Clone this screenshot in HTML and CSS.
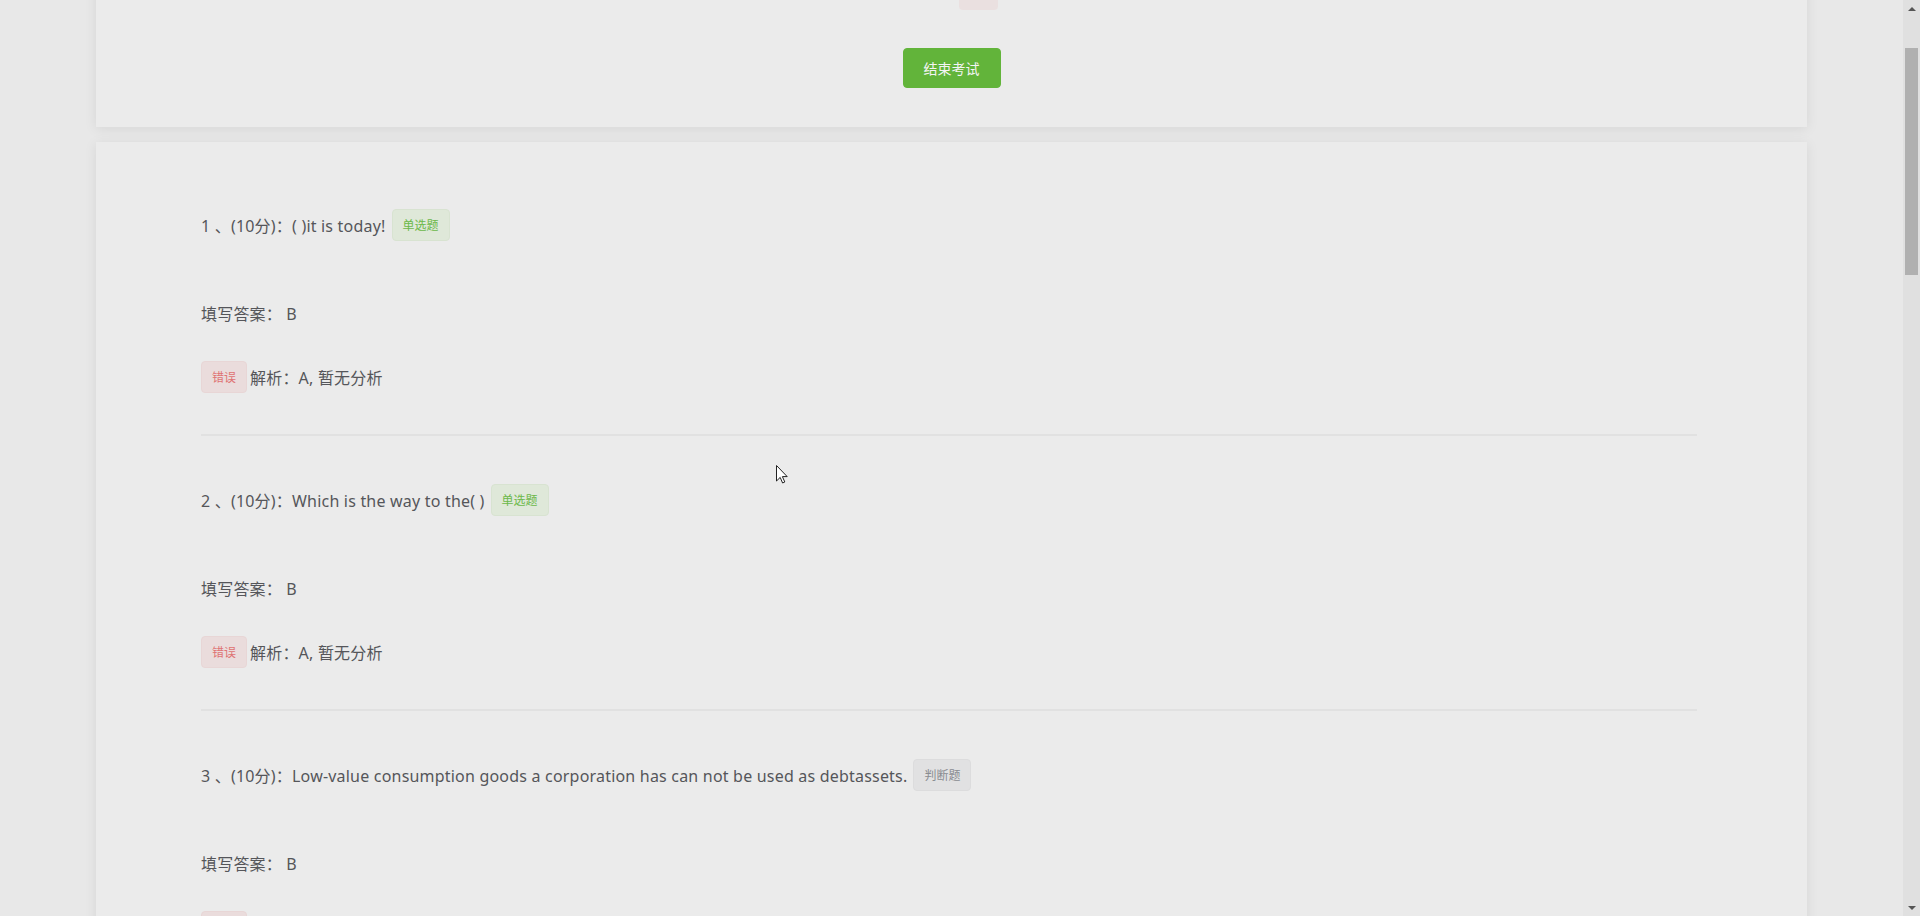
FILE: index.html
```html
<!DOCTYPE html>
<html lang="zh-CN">
<head>
<meta charset="UTF-8">
<meta name="viewport" content="width=device-width, initial-scale=1.0">
<title>考试结果</title>
<link rel="stylesheet" href="styles.css">
</head>

<body>
<div class="window">
  <main class="viewport">

    <!-- top card, scrolled partly out of view -->
    <section class="card card-top">
      <div class="summary-row">
        <span class="status-mark"></span>
      </div>
      <div class="finish-row">
        <button class="finish-button">结束考试</button>
      </div>
    </section>

    <section class="card card-questions">
      <div class="question">
        <div class="question-title">
          <span>1 、(10分)：( )it is today!</span>
          <span class="tag tag-success">单选题</span>
        </div>
        <div class="answer-line">填写答案： B</div>
        <div class="analysis-line">
          <span class="tag tag-danger">错误</span>
          <span>解析：A, 暂无分析</span>
        </div>
      </div>

      <div class="question">
        <div class="question-title">
          <span>2 、(10分)：Which is the way to the( )</span>
          <span class="tag tag-success">单选题</span>
        </div>
        <div class="answer-line">填写答案： B</div>
        <div class="analysis-line">
          <span class="tag tag-danger">错误</span>
          <span>解析：A, 暂无分析</span>
        </div>
      </div>

      <div class="question">
        <div class="question-title">
          <span>3 、(10分)：Low-value consumption goods a corporation has can not be used as debtassets.</span>
          <span class="tag tag-info">判断题</span>
        </div>
        <div class="answer-line">填写答案： B</div>
        <div class="analysis-line">
          <span class="tag tag-danger">错误</span>
          <span>解析：B, 暂无分析</span>
        </div>
      </div>
    </section>

    <svg class="cursor" width="12" height="19" viewBox="0 0 12 19">
      <path d="M0.5 0.5 L0.5 16 L4.2 12.4 L6.6 18 L8.8 17 L6.4 11.6 L11.2 11.6 Z" fill="#fff" stroke="#222" stroke-width="1"/>
    </svg>
  </main>

  <!-- page scrollbar -->
  <aside class="scrollbar">
    <div class="scroll-arrow up"></div>
    <div class="scroll-track">
      <div class="scroll-thumb"></div>
    </div>
    <div class="scroll-arrow down"></div>
  </aside>
</div>
</body>
</html>
```

FILE: styles.css
```css
html, body {
  margin: 0;
  height: 100%;
}

body {
  font-family: "Noto Sans", "Noto Sans CJK SC", sans-serif;
  font-size: 16px;
  letter-spacing: 0.2px;
  color: #55565a;
  background: #e8e8e8;
  overflow: hidden;
}

.window {
  display: flex;
  height: 916px;
}

.viewport {
  flex: 1;
  position: relative;
  overflow: hidden;
}

.card {
  width: 1711px;
  margin: 0 auto;
  background: #ebebeb;
  box-shadow: 0 2px 12px rgba(0,0,0,0.08);
  box-sizing: border-box;
}

/* top card */
.card-top {
  margin-top: -38px;
  padding: 16px 105px 39px;
}

.summary-row {
  display: flex;
  justify-content: center;
}

.status-mark {
  width: 39px;
  height: 32px;
  margin-left: 54px;
  border-radius: 4px;
  background: #eadcdc;
  opacity: 0.7;
}

.finish-row {
  display: flex;
  justify-content: center;
  margin-top: 38px;
}

.finish-button {
  height: 40px;
  padding: 0 20px;
  border: 1px solid #62b43a;
  border-radius: 4px;
  background: #62b43a;
  color: #f4f4f4;
  font-family: inherit;
  font-size: 14px;
  letter-spacing: 0;
  cursor: pointer;
}

/* question list */
.card-questions {
  margin-top: 15px;
  padding: 19px 110px 40px 105px;
}

.question {
  padding: 48px 0 41px;
  border-bottom: 2px solid #e1e1e1;
}

.question-title {
  display: flex;
  align-items: center;
  gap: 6px;
  height: 32px;
}

.answer-line {
  margin-top: 63px;
  line-height: 20px;
}

.analysis-line {
  display: flex;
  align-items: center;
  gap: 3px;
  height: 32px;
  margin-top: 37px;
}

.tag {
  display: inline-flex;
  align-items: center;
  height: 32px;
  padding: 0 10px;
  border: 1px solid transparent;
  border-radius: 4px;
  box-sizing: border-box;
  font-size: 12px;
  letter-spacing: 0;
  white-space: nowrap;
}

.tag-success {
  background: #dfe8d9;
  border-color: #d8e3d1;
  color: #6cb84a;
}

.tag-danger {
  background: #eadcdc;
  border-color: #e8d6d6;
  color: #df7373;
}

.tag-info {
  background: #e1e1e2;
  border-color: #dcdcdd;
  color: #8a8c91;
}

.cursor {
  position: absolute;
  left: 776px;
  top: 465px;
}

/* scrollbar */
.scrollbar {
  width: 17px;
  display: flex;
  flex-direction: column;
  background: #e0e0e0;
}

.scroll-arrow {
  height: 17px;
  display: flex;
  align-items: center;
  justify-content: center;
}

.scroll-arrow::before {
  content: "";
  border-left: 4px solid transparent;
  border-right: 4px solid transparent;
}

.scroll-arrow.up::before {
  border-bottom: 4px solid #555;
}

.scroll-arrow.down::before {
  border-top: 4px solid #555;
}

.scroll-track {
  flex: 1;
  padding: 31px 2px 0;
}

.scroll-thumb {
  height: 227px;
  background: #b0b0b0;
}
```
